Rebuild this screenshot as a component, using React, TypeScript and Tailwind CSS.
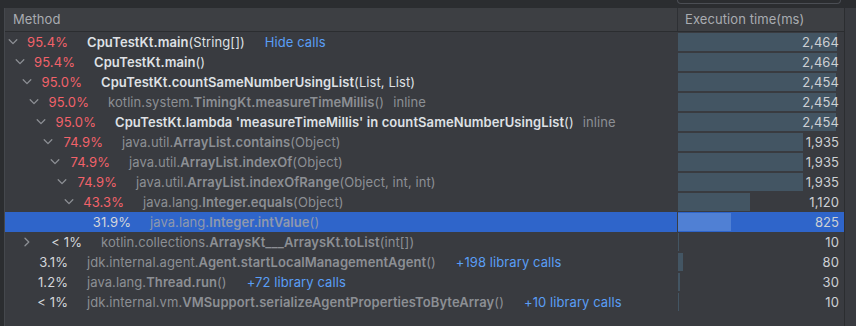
import React from "react";

type Seg = { t: string; b?: boolean };
type Row = {
  level: number;
  chevron?: "down" | "right";
  pct: string;
  red?: boolean;
  user?: boolean;
  segs: Seg[];
  inline?: boolean;
  link?: string;
  time: number;
  selected?: boolean;
};

const rows: Row[] = [
  { level: 0, chevron: "down", pct: "95.4%", red: true, user: true, segs: [{ t: "CpuTestKt.main", b: true }, { t: "(String[])" }], link: "Hide calls", time: 2464 },
  { level: 1, chevron: "down", pct: "95.4%", red: true, user: true, segs: [{ t: "CpuTestKt.main", b: true }, { t: "()" }], time: 2464 },
  { level: 2, chevron: "down", pct: "95.0%", red: true, user: true, segs: [{ t: "CpuTestKt.countSameNumberUsingList", b: true }, { t: "(List, List)" }], time: 2454 },
  { level: 3, chevron: "down", pct: "95.0%", red: true, segs: [{ t: "kotlin.system." }, { t: "TimingKt.measureTimeMillis", b: true }, { t: "()" }], inline: true, time: 2454 },
  { level: 4, chevron: "down", pct: "95.0%", red: true, user: true, segs: [{ t: "CpuTestKt.lambda 'measureTimeMillis' in countSameNumberUsingList", b: true }, { t: "()" }], inline: true, time: 2454 },
  { level: 5, chevron: "down", pct: "74.9%", red: true, segs: [{ t: "java.util." }, { t: "ArrayList.contains", b: true }, { t: "(Object)" }], time: 1935 },
  { level: 6, chevron: "down", pct: "74.9%", red: true, segs: [{ t: "java.util." }, { t: "ArrayList.indexOf", b: true }, { t: "(Object)" }], time: 1935 },
  { level: 7, chevron: "down", pct: "74.9%", red: true, segs: [{ t: "java.util." }, { t: "ArrayList.indexOfRange", b: true }, { t: "(Object, int, int)" }], time: 1935 },
  { level: 8, chevron: "down", pct: "43.3%", red: true, segs: [{ t: "java.lang." }, { t: "Integer.equals", b: true }, { t: "(Object)" }], time: 1120 },
  { level: 9, pct: "31.9%", segs: [{ t: "java.lang." }, { t: "Integer.intValue", b: true }, { t: "()" }], time: 825, selected: true },
  { level: 2, chevron: "right", pct: "< 1%", segs: [{ t: "kotlin.collections." }, { t: "ArraysKt___ArraysKt.toList", b: true }, { t: "(int[])" }], time: 10 },
  { level: 0, pct: "3.1%", segs: [{ t: "jdk.internal.agent." }, { t: "Agent.startLocalManagementAgent", b: true }, { t: "()" }], link: "+198 library calls", time: 80 },
  { level: 0, pct: "1.2%", segs: [{ t: "java.lang." }, { t: "Thread.run", b: true }, { t: "()" }], link: "+72 library calls", time: 30 },
  { level: 0, pct: "< 1%", segs: [{ t: "jdk.internal.vm." }, { t: "VMSupport.serializeAgentPropertiesToByteArray", b: true }, { t: "()" }], link: "+10 library calls", time: 10 },
];

const MAX = 2464;
const BAR_MAX = 159;

function Chevron({ dir }: { dir: "down" | "right" }) {
  if (dir === "down") {
    return (
      <svg width="10" height="8" viewBox="0 0 10 8" className="block">
        <polyline points="1.2,1.8 5,5.6 8.8,1.8" fill="none" stroke="#8c8f94" strokeWidth="1.3" strokeLinecap="round" strokeLinejoin="round" />
      </svg>
    );
  }
  return (
    <svg width="10" height="10" viewBox="0 0 10 10" className="block">
      <polyline points="3,1.2 6.8,5 3,8.8" fill="none" stroke="#8c8f94" strokeWidth="1.3" strokeLinecap="round" strokeLinejoin="round" />
    </svg>
  );
}

function fmt(n: number) {
  return n.toLocaleString("en-US");
}

export default function App() {
  return (
    <div
      className="w-[856px] h-[326px] bg-[#393b40] flex flex-col overflow-hidden text-[13px] leading-none tracking-[0.08px]"
      style={{ fontFamily: 'Inter, "Noto Sans", sans-serif' }}
    >
      {/* top strip */}
      <div className="h-[8px] bg-[#2b2d30] flex shrink-0">
        <div className="ml-[677px] w-[164px] h-[4px] border-x border-b border-[#4b4e54] rounded-b-[4px]" />
      </div>
      <div className="flex flex-1 min-h-0">
        {/* left strip */}
        <div className="w-[4px] bg-[#2b2d30] shrink-0" />
        <div className="w-px bg-[#45484d] shrink-0" />
        <div className="flex flex-col w-[839px] shrink-0">
          {/* header */}
          <div className="h-[24px] flex bg-[#3d3f43] border-b border-[#2b2d30] text-[#a9acb1] shrink-0">
            <div className="w-[672px] flex items-center pl-[8px]">Method</div>
            <div className="w-px h-full bg-[#2e3034]" />
            <div className="flex-1 flex items-center pl-[7px]">Execution time(ms)</div>
          </div>
          {/* rows */}
          {rows.map((r, i) => {
            const grayTxt = r.selected ? "text-[#8e98ad]" : "text-[#8c8f94]";
            const nameColor = r.user ? "text-[#dfe1e5]" : grayTxt;
            return (
              <div key={i} className={`h-[20px] flex shrink-0 ${r.selected ? "bg-[#2f65ca]" : ""}`}>
                <div className="w-[672px] flex items-center whitespace-nowrap overflow-hidden" style={{ paddingLeft: 3 + 7 * r.level }}>
                  <div className="w-[10px] flex justify-center items-center shrink-0">
                    {r.chevron ? <Chevron dir={r.chevron} /> : null}
                  </div>
                  <div className={`w-[50px] text-right shrink-0 ${r.red ? "text-[#f2626a]" : "text-[#d4d6da]"}`}>{r.pct}</div>
                  <div className={`ml-[19px] ${nameColor}`}>
                    {r.segs.map((s, j) => (
                      <span key={j} className={s.b ? "font-semibold" : "font-normal"}>
                        {s.t}
                      </span>
                    ))}
                  </div>
                  {r.inline ? <div className="ml-[9px] text-[#8c8f94]">inline</div> : null}
                  {r.link ? <div className="ml-[20px] text-[#5a9ef5]">{r.link}</div> : null}
                </div>
                <div className={`w-px h-full ${r.selected ? "bg-[#3a3d42]" : ""}`} />
                <div className="flex-1 relative flex items-center justify-end pr-[5px]">
                  <div
                    className={`absolute left-0 top-[1px] h-[18px] ${r.selected ? "bg-[#5080d4]" : "bg-[#435563]"}`}
                    style={{ width: Math.max(1, Math.round((r.time / MAX) * BAR_MAX)) }}
                  />
                  <span className="relative text-[#cdd0d4]">{fmt(r.time)}</span>
                </div>
              </div>
            );
          })}
        </div>
        {/* right scroll area */}
        <div className="w-px bg-[#2b2d30] shrink-0" />
        <div className="flex-1 bg-[#393b40]" />
      </div>
    </div>
  );
}
